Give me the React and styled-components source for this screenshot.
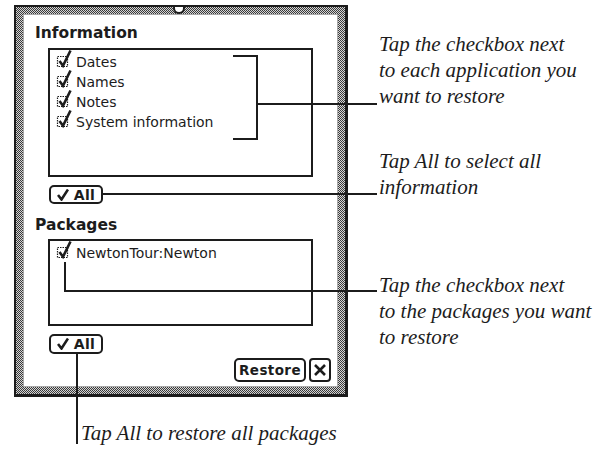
import React from "react";
import styled, { createGlobalStyle } from "styled-components";

const GlobalStyle = createGlobalStyle`
  html, body {
    margin: 0;
    padding: 0;
    background: #ffffff;
  }
`;

const INK = "#1c1c1c";

const Page = styled.div`
  position: relative;
  width: 605px;
  height: 452px;
  overflow: hidden;
  background: #fff;
  color: ${INK};
`;

const TopRow = styled.div`
  display: flex;
  align-items: flex-start;
`;

const Frame = styled.div`
  position: relative;
  box-sizing: border-box;
  width: 334px;
  height: 392px;
  margin: 5px 0 0 14px;
  border-style: solid;
  border-color: ${INK};
  border-width: 2px 3px 3px 2px;
  padding: 7px;
  background-color: #8e8e8e;
  background-image: repeating-conic-gradient(#3a3a3a 0% 25%, #d4d4d4 0% 50%);
  background-size: 2px 2px;
`;

const Notch = styled.div`
  position: absolute;
  top: 0;
  left: 157px;
  width: 8px;
  height: 5px;
  background: #fff;
  border: 2px solid ${INK};
  border-top: none;
  border-radius: 0 0 6px 6px;
`;

const Screen = styled.div`
  box-sizing: border-box;
  height: 100%;
  background: #fff;
  border: 1px solid #a8a8a8;
  padding: 9px 6px 0 11px;
  display: flex;
  flex-direction: column;
  font-family: "DejaVu Sans", Verdana, sans-serif;
`;

const Heading = styled.div`
  font-weight: bold;
  font-size: 15.5px;
  line-height: 19px;
  margin-top: ${(p) => p.$top || 0}px;
`;

const ListBox = styled.div`
  box-sizing: border-box;
  width: 265px;
  height: ${(p) => p.$height}px;
  margin: ${(p) => p.$top}px 0 0 13px;
  border: 2px solid ${INK};
  padding-top: 2px;
`;

const Row = styled.div`
  display: flex;
  align-items: flex-start;
  height: 20px;
  font-size: 14px;
  line-height: 20px;
  white-space: nowrap;
`;

const Box = styled.svg`
  flex: none;
  margin-left: 7px;
  overflow: visible;
`;

const Pill = styled.div`
  box-sizing: border-box;
  display: flex;
  align-items: center;
  justify-content: center;
  gap: 5px;
  height: ${(p) => p.$h || 19}px;
  width: ${(p) => p.$w}px;
  margin: ${(p) => p.$top || 0}px 0 0 ${(p) => p.$left || 0}px;
  border: 2px solid ${INK};
  border-radius: ${(p) => p.$r || 5}px;
  font-weight: bold;
  font-size: ${(p) => p.$fs || 14}px;
  letter-spacing: 0.4px;
  background: #fff;
`;

const Footer = styled.div`
  display: flex;
  justify-content: flex-end;
  gap: 3px;
  margin-top: 4px;
`;

const Notes = styled.div`
  margin-left: 31px;
  padding-top: 31px;
  font-family: "Liberation Serif", "Times New Roman", serif;
  font-style: italic;
  font-size: 21px;
  line-height: 26px;
`;

const Note = styled.div`
  margin-top: ${(p) => p.$top || 0}px;
  white-space: nowrap;
`;

const Caption = styled.div`
  margin-top: 23px;
  padding-left: 81px;
  font-family: "Liberation Serif", "Times New Roman", serif;
  font-style: italic;
  font-size: 21px;
  line-height: 26px;
`;

const Leaders = styled.svg`
  position: absolute;
  left: 0;
  top: 0;
  pointer-events: none;
`;

function CheckBox() {
  return (
    <Box width="19" height="20" viewBox="0 0 19 20">
      <rect
        x="0.5"
        y="4.5"
        width="10"
        height="10"
        fill="none"
        stroke={INK}
        strokeWidth="1.2"
        strokeDasharray="1.5 1"
      />
      <path
        d="M2.5 9 L6 13.8 L13.5 -1.5"
        fill="none"
        stroke={INK}
        strokeWidth="2.6"
        strokeLinejoin="miter"
      />
    </Box>
  );
}

function Tick() {
  return (
    <svg width="12" height="12" viewBox="0 0 12 12">
      <path d="M1 6 L4.5 10.5 L11 0.5" fill="none" stroke={INK} strokeWidth="2.6" />
    </svg>
  );
}

function CloseBox() {
  return (
    <Pill $w={22} $h={24} $r={4}>
      <svg width="12" height="12" viewBox="0 0 12 12">
        <path d="M1 1 L11 11 M11 1 L1 11" stroke={INK} strokeWidth="2.6" />
      </svg>
    </Pill>
  );
}

const apps = ["Dates", "Names", "Notes", "System information"];

export default function App() {
  return (
    <Page>
      <GlobalStyle />
      <TopRow>
        <Frame>
          <Notch />
          <Screen>
            <Heading>Information</Heading>
            <ListBox $height={129} $top={5}>
              {apps.map((a) => (
                <Row key={a}>
                  <CheckBox />
                  {a}
                </Row>
              ))}
            </ListBox>
            <Pill $w={54} $top={8} $left={14}>
              <Tick />
              All
            </Pill>
            <Heading $top={12}>Packages</Heading>
            <ListBox $height={87} $top={4}>
              <Row>
                <CheckBox />
                NewtonTour:Newton
              </Row>
            </ListBox>
            <Pill $w={54} $h={20} $top={8} $left={14}>
              <Tick />
              All
            </Pill>
            <Footer>
              <Pill $w={72} $h={24} $fs={13.5}>Restore</Pill>
              <CloseBox />
            </Footer>
          </Screen>
        </Frame>
        <Notes>
          <Note>
            Tap the checkbox next
            <br />
            to each application you
            <br />
            want to restore
          </Note>
          <Note $top={39}>
            Tap All to select all
            <br />
            information
          </Note>
          <Note $top={72}>
            Tap the checkbox next
            <br />
            to the packages you want
            <br />
            to restore
          </Note>
        </Notes>
      </TopRow>
      <Caption>Tap All to restore all packages</Caption>
      <Leaders width="605" height="452" viewBox="0 0 605 452">
        <g fill="none" stroke={INK} strokeWidth="2">
          <path d="M233 56 H257 V139 H233" />
          <path d="M257 104 H377" />
          <path d="M103 194 H377" />
          <path d="M65 262 V291 H377" />
          <path d="M77 354 V444" />
        </g>
      </Leaders>
    </Page>
  );
}
